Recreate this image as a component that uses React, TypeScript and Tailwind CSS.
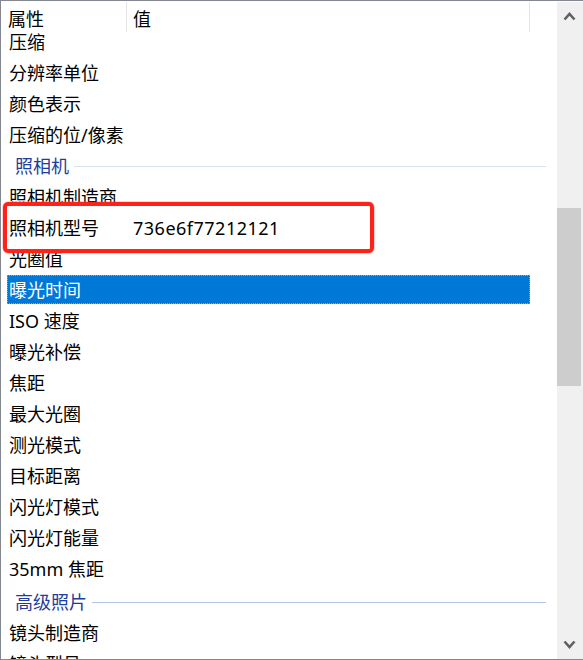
import React from "react";

type Item =
  | { kind: "row"; label: string; value?: string; selected?: boolean }
  | { kind: "group"; label: string; line: string; extraTop?: boolean };

const items: Item[] = [
  { kind: "row", label: "压缩" },
  { kind: "row", label: "分辨率单位" },
  { kind: "row", label: "颜色表示" },
  { kind: "row", label: "压缩的位/像素" },
  { kind: "group", label: "照相机", line: "bg-[#d9e0f0]" },
  { kind: "row", label: "照相机制造商" },
  { kind: "row", label: "照相机型号", value: "736e6f77212121" },
  { kind: "row", label: "光圈值" },
  { kind: "row", label: "曝光时间", selected: true },
  { kind: "row", label: "ISO 速度" },
  { kind: "row", label: "曝光补偿" },
  { kind: "row", label: "焦距" },
  { kind: "row", label: "最大光圈" },
  { kind: "row", label: "测光模式" },
  { kind: "row", label: "目标距离" },
  { kind: "row", label: "闪光灯模式" },
  { kind: "row", label: "闪光灯能量" },
  { kind: "row", label: "35mm 焦距" },
  { kind: "group", label: "高级照片", line: "bg-[#b3c3e6]", extraTop: true },
  { kind: "row", label: "镜头制造商" },
  { kind: "row", label: "镜头型号" },
];

function Chevron({ up }: { up: boolean }) {
  return (
    <svg width="13" height="10" viewBox="0 0 13 10">
      <polyline
        points={up ? "1.5,8.5 6.5,3 11.5,8.5" : "1.5,1.5 6.5,7 11.5,1.5"}
        fill="none"
        stroke="#606060"
        strokeWidth="2.6"
      />
    </svg>
  );
}

export default function App() {
  return (
    <div
      className="relative w-[583px] h-[660px] overflow-hidden bg-white border-t border-l border-b border-[#828790] pt-[1px] pl-[1px] text-[18px] text-black"
      style={{ fontFamily: '"Noto Sans", "Noto Sans CJK SC", sans-serif' }}
    >
      <div className="flex h-full">
        <div className="flex flex-col w-[555px] min-w-0">
          {/* header */}
          <div className="flex h-[30px] shrink-0">
            <div className="w-[125px] h-full border-r border-[#e5e5e5] pl-[6px] flex items-center">
              <span className="mt-[3px] leading-none">属性</span>
            </div>
            <div className="w-[403px] h-full border-r border-[#e5e5e5] pl-[6px] flex items-center">
              <span className="mt-[3px] leading-none">值</span>
            </div>
          </div>
          {/* list */}
          <div className="flex-1 overflow-hidden">
            <div className="-mt-[6px]">
              {items.map((it, i) =>
                it.kind === "group" ? (
                  <div
                    key={i}
                    className={`h-[31px] flex items-center pl-[13px] pt-[1px] ${it.extraTop ? "mt-[2px]" : ""}`}
                  >
                    <span className="text-[#1f3d99] leading-[29px]">{it.label}</span>
                    <div className={`ml-[5px] flex-1 mr-[11px] h-px ${it.line}`} />
                  </div>
                ) : (
                  <div key={i} className="h-[31px] py-[1px] pl-[5px]">
                    <div
                      className={`h-[29px] w-[523px] flex items-center border pl-[1px] pt-[2px] ${
                        it.selected
                          ? "bg-[#0078d7] border-dotted border-[#e8953a] text-white"
                          : "border-transparent"
                      }`}
                    >
                      <span className="w-[124px] shrink-0 whitespace-nowrap leading-[25px]">
                        {it.label}
                      </span>
                      {it.value && (
                        <span className="leading-[25px] tracking-[0.5px]">{it.value}</span>
                      )}
                    </div>
                  </div>
                )
              )}
            </div>
          </div>
        </div>
        {/* scrollbar */}
        <div className="w-[26px] h-full bg-[#f0f0f0] flex flex-col">
          <div className="h-[28px] flex items-center justify-center pr-[1px]">
            <Chevron up />
          </div>
          <div className="flex-1">
            <div className="mt-[178px] w-[24px] h-[178px] bg-[#cdcdcd]" />
          </div>
          <div className="h-[28px] flex items-center justify-center pr-[1px]">
            <Chevron up={false} />
          </div>
        </div>
      </div>
      {/* red annotation */}
      <div className="absolute left-[2px] top-[201px] w-[371px] h-[51px] border-[4px] border-[#ff2219] rounded-[5px] shadow-[0_0_0_0.5px_rgba(255,80,80,0.5)]" />
    </div>
  );
}
